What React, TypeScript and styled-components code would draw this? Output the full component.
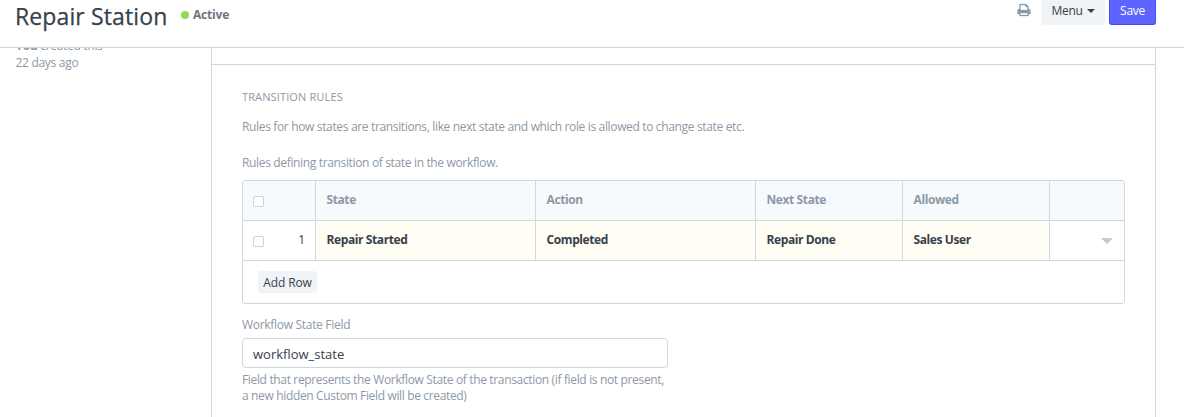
import React from "react";
import styled, { createGlobalStyle } from "styled-components";

const line = "#d1d8dd";
const muted = "#8d99a6";
const ink = "#36414c";

const GlobalStyle = createGlobalStyle`
  *, *::before, *::after { box-sizing: border-box; }
  body {
    margin: 0;
    overflow: hidden;
    background: #fff;
    color: ${ink};
    font: 12px/16px "Open Sans", "Noto Sans", sans-serif;
  }
`;

const Page = styled.div`
  height: 417px;
  display: flex;
  flex-direction: column;
  overflow: hidden;
`;

const Header = styled.header`
  flex: none;
  height: 48px;
  display: flex;
  align-items: flex-start;
  padding: 0 28px 0 15px;
  border-bottom: 1px solid ${line};
`;

const Title = styled.h1`
  margin: 0;
  width: 153px;
  font-size: 23px;
  line-height: 32px;
  font-weight: 500;
  letter-spacing: 0.12px;
  white-space: nowrap;
  -webkit-text-stroke: 0.25px ${ink};
`;

const Status = styled.div`
  display: flex;
  align-items: center;
  gap: 4px;
  margin-left: 13px;
  height: 30px;
  color: #6c7680;
  font-weight: 700;
  letter-spacing: -0.2px;
`;

const Dot = styled.span`
  width: 8px;
  height: 8px;
  border-radius: 50%;
  background: #98d85b;
`;

const Actions = styled.div`
  display: flex;
  margin-left: auto;
`;

const PrintIcon = styled.svg`
  width: 14px;
  height: 14px;
  margin: 3px 10px 0 0;
  fill: ${muted};
  stroke: ${muted};
  stroke-width: 40;
`;

const Button = styled.button<{ $primary?: boolean }>`
  display: flex;
  align-items: center;
  justify-content: center;
  gap: 4px;
  width: ${(p) => (p.$primary ? 47 : 64)}px;
  height: 25px;
  margin: 0 0 0 ${(p) => (p.$primary ? 4 : 0)}px;
  padding: 0 0 2px;
  border: solid ${(p) => (p.$primary ? "#444bff" : "#f0f4f7")};
  border-width: 0 1px 1px;
  border-radius: 0 0 3px 3px;
  background: ${(p) => (p.$primary ? "#5e64ff" : "#f0f4f7")};
  color: ${(p) => (p.$primary ? "#fff" : ink)};
  font: inherit;
  letter-spacing: -0.3px;
`;

const Caret = styled.span<{ $size?: number; $color?: string }>`
  border: solid transparent;
  border-width: ${(p) => p.$size ?? 4}px ${(p) => p.$size ?? 4}px 0;
  border-top-color: ${(p) => p.$color ?? ink};
`;

const Body = styled.div`
  flex: 1;
  min-height: 0;
  display: flex;
  overflow: hidden;
`;

const Sidebar = styled.aside`
  width: 211px;
  margin-top: -11px;
  padding-left: 15.5px;
  color: ${muted};
  line-height: 17px;
  letter-spacing: -0.3px;
`;

const Main = styled.main`
  width: 945px;
  border: solid ${line};
  border-width: 0 1px;
`;

const PreviousSection = styled.div`
  height: 17px;
  border-bottom: 1px solid ${line};
`;

const Section = styled.section`
  padding: 24px 30px 0;
`;

const Text = styled.p<{ $top?: number; $spacing?: number }>`
  margin: ${(p) => p.$top ?? 0}px 0 0;
  color: ${muted};
  letter-spacing: ${(p) => p.$spacing ?? -0.345}px;
  white-space: nowrap;
`;

const SectionTitle = styled(Text)`
  font-size: 11px;
  text-transform: uppercase;
`;

const Grid = styled.div`
  margin-top: 9px;
  width: 883px;
  height: 124px;
  border: 1px solid ${line};
  border-radius: 3px;
  overflow: hidden;
`;

const Row = styled.div<{ $head?: boolean }>`
  display: grid;
  grid-template-columns: 73px 220px 220px 147px 147px 1fr;
  height: 40px;
  border-bottom: 1px solid ${line};
  background: ${(p) => (p.$head ? "#f7fafc" : "#fff")};
  color: ${(p) => (p.$head ? muted : ink)};
`;

const Cell = styled.div<{ $required?: boolean }>`
  padding: 11px 10px 0 10.5px;
  border-right: 1px solid ${line};
  background: ${(p) => (p.$required ? "#fffdf4" : "transparent")};
  font-weight: 700;
  letter-spacing: -0.4px;
`;

const IndexCell = styled.div`
  display: flex;
  justify-content: space-between;
  padding: 11px 10px 0 10px;
  border-right: 1px solid ${line};
`;

const Checkbox = styled.span`
  width: 11px;
  height: 11px;
  margin-top: 4px;
  border: 1px solid #cfd3d7;
  border-radius: 2px;
  background: #fff;
`;

const ToggleCell = styled.div`
  display: flex;
  align-items: center;
  justify-content: flex-end;
  padding-right: 11px;
`;

const AddRow = styled.button`
  display: block;
  margin: 10px 0 0 15px;
  padding: 1px 0 0;
  width: 59px;
  height: 22px;
  border: 0;
  border-radius: 3px;
  background: #f0f4f7;
  color: ${ink};
  font: inherit;
  letter-spacing: -0.1px;
`;

const Field = styled.div`
  display: flex;
  align-items: center;
  width: 426px;
  height: 30px;
  margin: 5px 0 4px;
  padding: 2px 10px 0;
  border: 1px solid ${line};
  border-radius: 4px;
  font-size: 13px;
`;

const columns = ["State", "Action", "Next State", "Allowed"];
const values = ["Repair Started", "Completed", "Repair Done", "Sales User"];

export default function App() {
  return (
    <Page>
      <GlobalStyle />
      <Header>
        <Title>Repair Station</Title>
        <Status><Dot />Active</Status>
        <Actions>
          <PrintIcon viewBox="0 0 1792 1792">
            <path d="M448 1536h896v-256H448v256zm0-640h896V512h-160q-40 0-68-28t-28-68V256H448v640zm1152 64q0-26-19-45t-45-19-45 19-19 45 19 45 45 19 45-19 19-45zm128 0v416q0 13-9.5 22.5t-22.5 9.5h-224v160q0 40-28 68t-68 28H416q-40 0-68-28t-28-68v-160H96q-13 0-22.5-9.5T64 1376V960q0-79 56.5-135.5T256 768h64V224q0-40 28-68t68-28h672q40 0 88 20t76 48l152 152q28 28 48 76t20 88v256h64q79 0 135.5 56.5T1728 960z" />
          </PrintIcon>
          <Button>Menu<Caret /></Button>
          <Button $primary>Save</Button>
        </Actions>
      </Header>
      <Body>
        <Sidebar><b>You</b> created this<br />22 days ago</Sidebar>
        <Main>
          <PreviousSection />
          <Section>
            <SectionTitle $spacing={0.13}>Transition Rules</SectionTitle>
            <Text $top={14}>Rules for how states are transitions, like next state and which role is allowed to change state etc.</Text>
            <Text $top={20}>Rules defining transition of state in the workflow.</Text>
            <Grid>
              <Row $head>
                <IndexCell><Checkbox /></IndexCell>
                {columns.map((c) => <Cell key={c}>{c}</Cell>)}
              </Row>
              <Row>
                <IndexCell><Checkbox />1</IndexCell>
                {values.map((v) => <Cell key={v} $required>{v}</Cell>)}
                <ToggleCell><Caret $size={6} $color="#c8c8c8" /></ToggleCell>
              </Row>
              <AddRow>Add Row</AddRow>
            </Grid>
            <Text $top={13} $spacing={-0.3}>Workflow State Field</Text>
            <Field>workflow_state</Field>
            <Text>Field that represents the Workflow State of the transaction (if field is not present,<br />a new hidden Custom Field will be created)</Text>
          </Section>
        </Main>
      </Body>
    </Page>
  );
}
